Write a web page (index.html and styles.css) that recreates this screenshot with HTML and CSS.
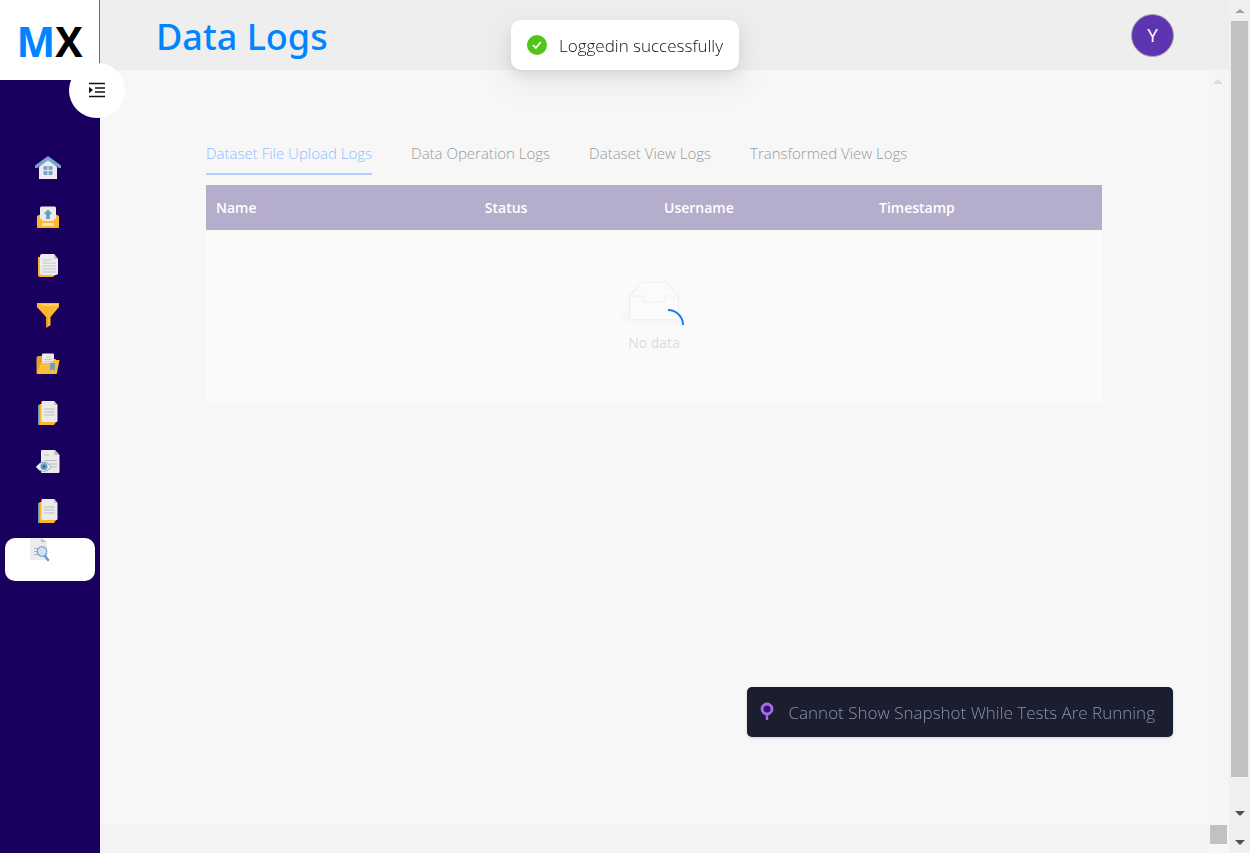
FILE: index.html
```html
<!DOCTYPE html>
<html lang="en">
<head>
<meta charset="utf-8">
<title>Data Logs</title>
<link rel="stylesheet" href="styles.css">
</head>
<body>
<div class="app">
  <aside class="sidebar">
    <div class="logo"><span class="logo-m">M</span>X</div>
    <button class="toggle" type="button" aria-label="Toggle menu">
      <svg width="16" height="16" viewBox="0 0 16 16"><path d="M0 1.500h16M6 6h10M6 10h10M0 14.500h16" stroke="#111" stroke-width="1.300"/><path d="M0 4.800v6.400L4 8z" fill="#111"/></svg>
    </button>
    <nav class="nav">
      <a class="nav-item" href="#" aria-label="Home"><svg class="icon" viewBox="0 0 26 26"><path d="M4 12l9-9 9 9v12H4z" fill="#ececf0"/><path d="M13 1L0 10.500v2q1 1.500 3 0L13 5.500l10 7q2 1.500 3 0v-2z" fill="#79a4ca"/><path d="M8.500 11h4v4h-4zm5 0h4v4h-4zM8.500 16h4v4h-4zm5 0h4v4h-4z" fill="#79a4ca"/></svg></a>
      <a class="nav-item" href="#" aria-label="Upload"><svg class="icon" viewBox="0 0 26 26"><path d="M2 12l4-2h14l4 2v11q0 1-1 1H3q-1 0-1-1z" fill="#fdb62f"/><path d="M5 4q0-1.500 1.500-1.500h13Q21 2.500 21 4v10l-3 3H8l-3-3z" fill="#e9ebee"/><path d="M13 5.500L8.500 10H11v5h4v-5h2.500z" fill="#6f9cc4"/><rect x="7" y="19" width="12" height="3" rx="1" fill="#ffe5a0"/></svg></a>
      <a class="nav-item" href="#" aria-label="Datasets"><svg class="icon" viewBox="0 0 26 26"><path d="M3 4h14v17l3 1q-1 2-3 2H5q-2 0-2-2z" fill="#fdb62f"/><path d="M5 3q0-2 2-2h12l4 5v14q0 2-2 2H7q-2 0-2-2z" fill="#ebecee"/><path d="M19 1v5h4z" fill="#c3c5c9"/><path d="M7.500 7H17M7.500 10H21M7.500 13H21M7.500 16H21M7.500 19H21" stroke="#c5c6c9"/></svg></a>
      <a class="nav-item" href="#" aria-label="Filter"><svg class="icon" viewBox="0 0 26 26"><path d="M2 1h22v4l-8.500 10v8.500L11 25.500V15L2 5z" fill="#fdb62f"/><path d="M4 2h19v2H10z" fill="#ffd162"/><path d="M11 15h2v10l-2 .5z" fill="#e7a22a"/></svg></a>
      <a class="nav-item" href="#" aria-label="Saved files"><svg class="icon" viewBox="0 0 26 26"><path d="M1.500 7q0-2 2-2H9l2 3h10v13l-2 2H2.500q-1 0-1-1z" fill="#e4a02c"/><path d="M7 3.500q0-1 1-1h10q1 0 1 1V15H7z" fill="#ececec"/><path d="M11 6h5M9 8.500h8M9 10.500h8" stroke="#c8c8c8"/><path d="M2 22L6 12h10l3-3h5.500l-2.500 13q0 1-1 1H3z" fill="#fdbe37"/><path d="M15 12h5v8l-2.500-2-2.500 2z" fill="#709fc2"/></svg></a>
      <a class="nav-item" href="#" aria-label="Documents"><svg class="icon" viewBox="0 0 26 26"><path d="M3 5h4v18h12l-2 2H3z" fill="#6d9bbd"/><path d="M4.500 4H8v18h13l-2 3H4.500z" fill="#fdb62f"/><path d="M6.500 2q0-1 1-1H19l3.500 4v16q0 1-1 1h-14q-1 0-1-1z" fill="#ebecea"/><path d="M19 1v4h3.500z" fill="#c8cbc9"/><path d="M9 9h10.500M9 12h10.500M9 15h10.500" stroke="#b9bdbb"/></svg></a>
      <a class="nav-item" href="#" aria-label="Views"><svg class="icon" viewBox="0 0 26 26"><path d="M6 2q0-1 1-1h13l4.500 5v17q0 1-1 1H7q-1 0-1-1z" fill="#ebebeb"/><path d="M19 1v5h5.500z" fill="#c1c4c5"/><path d="M9 6h5M9 11.500h13M14 15h8M16 18h6" stroke="#babdc0"/><path d="M1 18q7.500-10 15.500 0-8 9-15.500 0z" fill="#edf3f8" stroke="#85a8c4"/><circle cx="9" cy="17.500" r="3.600" fill="#719fc5"/><circle cx="9" cy="17.500" r="1.500" fill="#3c658a"/></svg></a>
      <a class="nav-item" href="#" aria-label="Reports"><svg class="icon" viewBox="0 0 26 26"><path d="M3 5h4v18h12l-2 2H3z" fill="#6d9bbd"/><path d="M4.500 4H8v18h13l-2 3H4.500z" fill="#fdb62f"/><path d="M6.500 2q0-1 1-1H19l3.500 4v16q0 1-1 1h-14q-1 0-1-1z" fill="#ebecea"/><path d="M19 1v4h3.500z" fill="#c8cbc9"/><path d="M9 9h10.500M9 12h10.500M9 15h10.500" stroke="#b9bdbb"/></svg></a>
      <a class="nav-item active" href="#" aria-label="Data logs"><svg width="20" height="24" viewBox="0 0 20 24"><path d="M0 0h11l6 4v18H0z" fill="#ececee"/><path d="M11 0v4h6z" fill="#bec1c5"/><path d="M4 10.500h6M4 13.500h6M4 16.500h6" stroke="#b6bac0"/><path d="M15 18l3 4" stroke="#6d9dc9" stroke-width="2.500" stroke-linecap="round"/><circle cx="12" cy="13.500" r="4.800" fill="#d5dfea" stroke="#79a5cd" stroke-width="1.300"/></svg></a>
    </nav>
  </aside>
  <div class="page">
    <header class="header">
      <h1 class="title">Data Logs</h1>
      <button class="avatar" type="button">Y</button>
    </header>
    <div class="scroller">
      <main class="content">
        <div class="tabs" role="tablist">
          <button class="tab selected" type="button" role="tab" aria-selected="true">Dataset File Upload Logs</button>
          <button class="tab" type="button" role="tab">Data Operation Logs</button>
          <button class="tab" type="button" role="tab">Dataset View Logs</button>
          <button class="tab" type="button" role="tab">Transformed View Logs</button>
        </div>
        <table class="logs">
          <thead><tr><th class="c-name">Name</th><th class="c-status">Status</th><th class="c-user">Username</th><th class="c-time">Timestamp</th></tr></thead>
          <tbody><tr><td colspan="4">
            <div class="empty">
              <svg width="68" height="44" viewBox="0 0 64 41"><ellipse cx="32" cy="33" rx="32" ry="7" fill="#f7f7f7"/><g fill="#fbfbfb" stroke="#efefef"><path d="M55 12.760L44.854 1.258C44.367.474 43.656 0 42.907 0H21.093c-.749 0-1.460.474-1.947 1.257L9 12.761V22h46v-9.240z"/><path d="M41.613 15.931c0-1.605.994-2.930 2.227-2.931H55v18.137C55 33.260 53.680 35 52.050 35h-40.100C10.320 35 9 33.259 9 31.137V13h11.160c1.233 0 2.227 1.323 2.227 2.928v.022c0 1.605 1.005 2.901 2.237 2.901h14.752c1.232 0 2.237-1.308 2.237-2.913v-.007z"/></g></svg>
              <span>No data</span>
              <svg class="spinner" width="32" height="32" viewBox="0 0 32 32"><path d="M16 1a15 15 0 0 1 15 15" fill="none" stroke="#1677ff" stroke-width="2"/></svg>
            </div>
          </td></tr></tbody>
        </table>
      </main>
      <div class="inner-bar"><i class="up faint"></i></div>
      <div class="bottom-bar"></div>
      <div class="corner"></div>
    </div>
  </div>
  <div class="outer-bar"><i class="up"></i><div class="thumb"></div><i class="down first"></i><i class="down"></i></div>
</div>
<div class="toast" role="status"><svg width="20" height="20" viewBox="0 0 20 20"><circle cx="10" cy="10" r="10" fill="#52c41a"/><path d="M6 10l2.800 3L13.800 7" fill="none" stroke="#fff" stroke-width="1.700"/></svg>Loggedin successfully</div>
<div class="snapshot"><svg width="14" height="20" viewBox="0 0 14 20"><path d="M7 12v6" stroke="#a268e2" stroke-width="2.400"/><circle cx="7" cy="7" r="5" fill="#381466" stroke="#a76cea" stroke-width="2.800"/></svg>Cannot Show Snapshot While Tests Are Running</div>
</body>
</html>
```

FILE: styles.css
```css
* { box-sizing: border-box; }
body { margin: 0; font-family: "Open Sans", "Noto Sans", sans-serif; background: #f7f7f7; }
button { border: 0; padding: 0; background: none; font: inherit; }
.app { display: grid; grid-template-columns: 100px 1fr 21px; min-height: 100vh; }
.sidebar { position: relative; background: #1a005e; }
.logo { height: 80px; display: flex; align-items: center; justify-content: center; padding-top: 2px; background: #fff; border-right: 1px solid #0084ff; font-size: 41px; font-weight: 700; color: #000; }
.logo-m { color: #0084ff; }
.toggle { position: absolute; left: 69px; top: 63px; width: 56px; height: 55px; padding-bottom: 2px; border-radius: 50%; background: #fff; display: flex; align-items: center; justify-content: center; z-index: 2; }
.nav { display: flex; flex-direction: column; padding: 63px 5px 0; }
.nav-item { height: 49px; display: flex; align-items: center; padding-left: 30px; }
.icon { width: 26px; height: 26px; }
.active { height: 43px; margin-top: 3px; padding-left: 25px; align-items: flex-start; background: #fff; border-radius: 10px; }
.page { display: flex; flex-direction: column; }
.header { height: 70px; background: #eee; display: flex; align-items: center; justify-content: space-between; padding: 0 55px 0 56px; }
.title { margin: 0; padding-top: 4px; font-family: "Noto Sans", "Open Sans", sans-serif; font-size: 36px; line-height: 66px; font-weight: 500; color: #0084ff; }
.avatar { width: 43px; height: 43px; border-radius: 50%; background: #5e35b1; border: 1px solid #aaa; color: #fff; font-size: 19px; font-weight: 500; }
.scroller { flex: 1; display: grid; grid-template-columns: 1fr 20px; grid-template-rows: 1fr 28px; }
.content { padding: 71px 107px 0 106px; }
.tabs { display: flex; gap: 39px; margin-bottom: 10px; }
.tab { height: 34px; padding-bottom: 8px; font-size: 15px; line-height: 20px; font-weight: 300; white-space: nowrap; color: #999; border-bottom: 2px solid transparent; }
.selected { color: #8fbeff; border-color: #b0d1ff; }
.logs { width: 100%; table-layout: fixed; border-collapse: collapse; background: #fafafa; }
th { height: 45px; padding: 0 10px; background: #b4adcb; color: #fff; font-size: 14px; font-weight: 600; text-align: left; }
.c-name { width: 30%; }
.c-status { width: 20%; }
.c-user { width: 24%; }
.c-time { width: 26%; }
td { height: 175px; padding: 0; }
.empty { position: relative; display: flex; flex-direction: column; align-items: center; gap: 6px; font-size: 14px; line-height: 22px; color: #dcdcdc; }
.spinner { position: absolute; left: calc(50% - 2px); top: 27px; }
.inner-bar { background: #f5f5f5; display: flex; justify-content: center; padding: 9px 2px 0 0; }
.bottom-bar { background: #f3f3f3; }
.corner { background: #c1c1c1; width: 17px; height: 19px; margin-left: 1px; }
.outer-bar { background: #f0f0f0; display: flex; flex-direction: column; align-items: center; padding-top: 9px; padding-bottom: 8px; }
.thumb { width: 17px; flex: 1; margin-top: 8px; background: #c1c1c1; }
.up, .down { width: 0; height: 0; border: 5px solid transparent; }
.up { border-top: 0; border-bottom: 4px solid #a3a3a3; }
.faint { border-bottom: 5px solid #dcdcdc; }
.down { border-bottom: 0; border-top-color: #505050; }
.first { margin: 34px 0 24px; }
.toast { position: fixed; top: 20px; left: 50%; transform: translateX(-50%); display: flex; align-items: center; gap: 12px; height: 50px; padding: 0 16px; border-radius: 10px; background: #fff; color: #111; font-size: 17px; font-weight: 300; white-space: nowrap; box-shadow: 0 6px 16px rgba(0,0,0,.08), 0 3px 6px -4px rgba(0,0,0,.12), 0 9px 28px 8px rgba(0,0,0,.05); }
.snapshot { position: fixed; right: 77px; bottom: 116px; display: flex; align-items: center; gap: 15px; height: 50px; padding: 0 18px 0 13px; border-radius: 5px; background: #1b1e2e; color: #8c91ac; font-size: 17px; font-weight: 300; white-space: nowrap; box-shadow: 0 1px 3px rgba(0,0,0,.15); }
```
